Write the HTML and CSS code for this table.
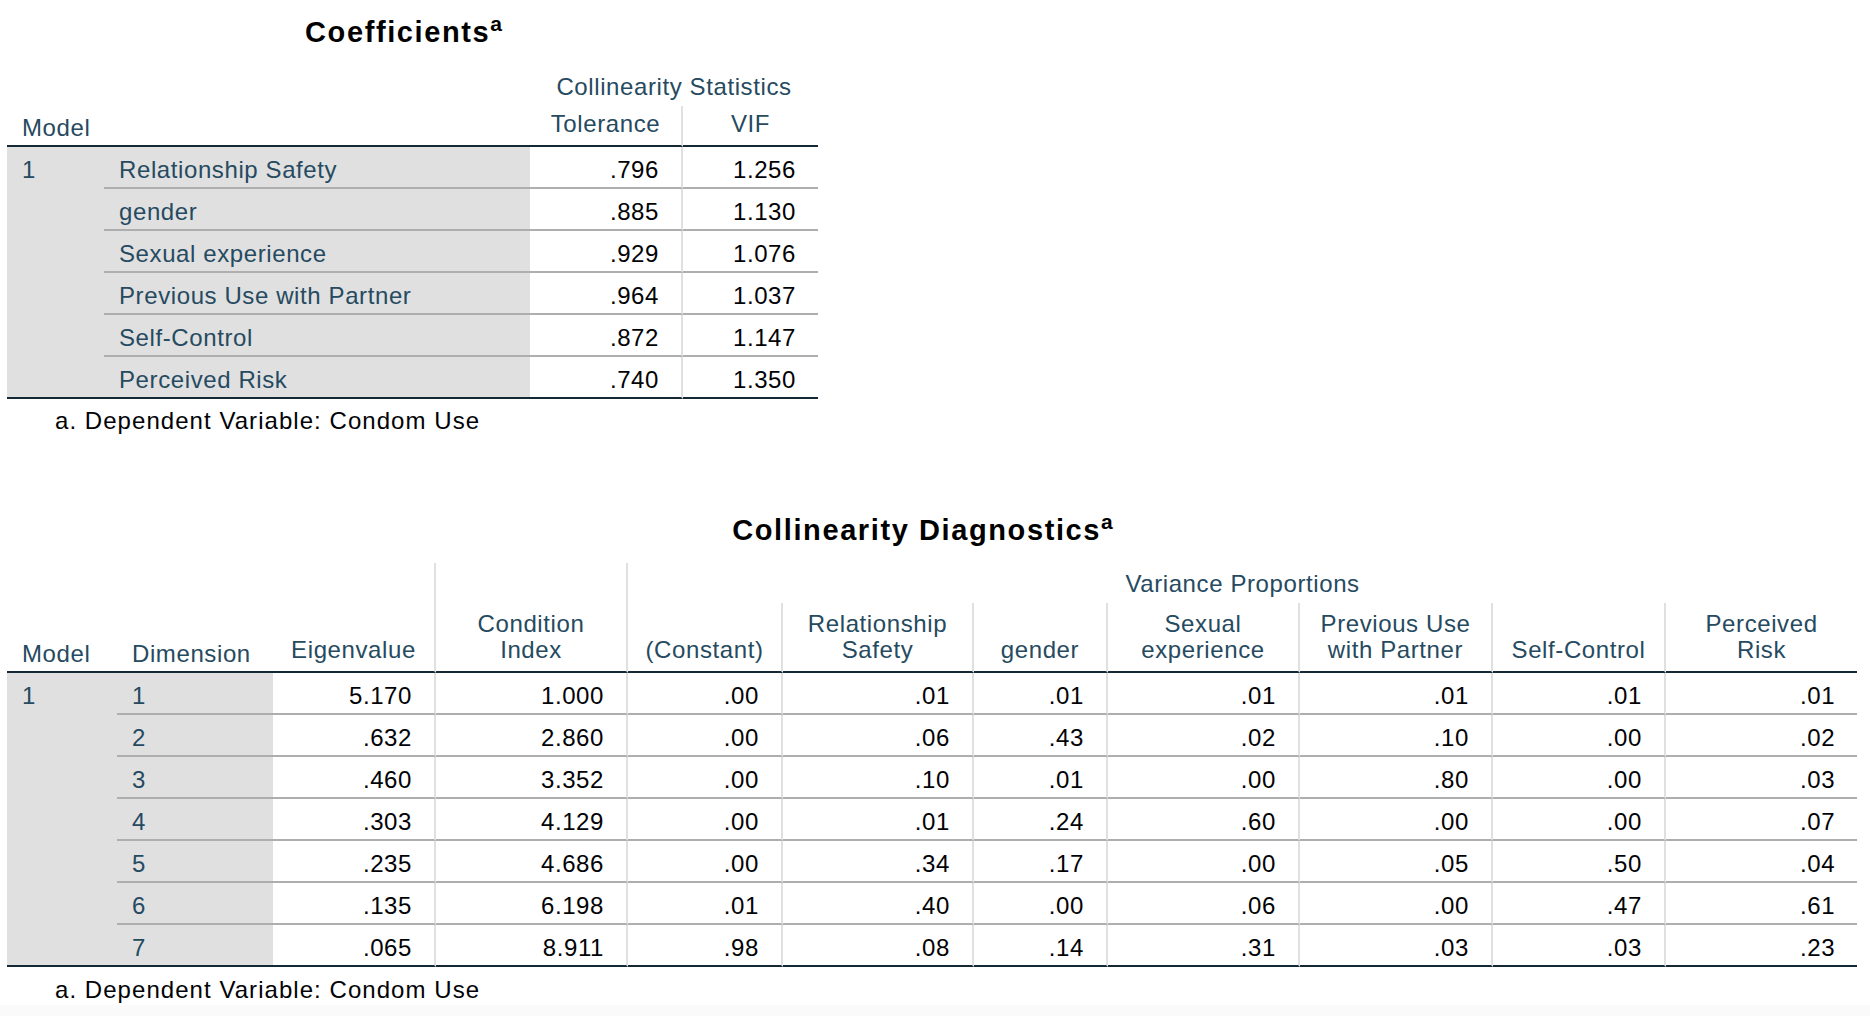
FILE: index.html
```html
<!DOCTYPE html>
<html lang="en">
<head>
<meta charset="utf-8">
<title>Coefficients and Collinearity Diagnostics</title>
<link rel="stylesheet" href="styles.css">
</head>
<body>
<main class="page">
  <section class="block block-coef">
    <div class="title title-coef">Coefficients<sup>a</sup></div>
    <table class="spss t-coef">
      <colgroup>
        <col class="c-model1"><col class="c-label"><col class="c-tol"><col class="c-vif">
      </colgroup>
      <thead>
        <tr class="h1-coef">
          <th class="dim" colspan="2" rowspan="2">Model</th>
          <th class="grp" colspan="2">Collinearity Statistics</th>
        </tr>
        <tr class="h2-coef">
          <th class="col vline">Tolerance</th>
          <th class="col">VIF</th>
        </tr>
      </thead>
      <tbody>
        <tr>
          <td class="gray mcell" rowspan="6">1</td>
          <td class="gray lab">Relationship Safety</td>
          <td class="num vline">.796</td>
          <td class="num">1.256</td>
        </tr>
        <tr>
          <td class="gray lab">gender</td>
          <td class="num vline">.885</td>
          <td class="num">1.130</td>
        </tr>
        <tr>
          <td class="gray lab">Sexual experience</td>
          <td class="num vline">.929</td>
          <td class="num">1.076</td>
        </tr>
        <tr>
          <td class="gray lab">Previous Use with Partner</td>
          <td class="num vline">.964</td>
          <td class="num">1.037</td>
        </tr>
        <tr>
          <td class="gray lab">Self-Control</td>
          <td class="num vline">.872</td>
          <td class="num">1.147</td>
        </tr>
        <tr class="last">
          <td class="gray lab">Perceived Risk</td>
          <td class="num vline">.740</td>
          <td class="num">1.350</td>
        </tr>
      </tbody>
    </table>
    <div class="footnote">a. Dependent Variable: Condom Use</div>
  </section>

  <section class="block block-diag">
    <div class="title title-diag">Collinearity Diagnostics<sup>a</sup></div>
    <table class="spss t-diag">
      <colgroup>
        <col class="d-model"><col class="d-dim"><col class="d-eig"><col class="d-cond">
        <col class="d-const"><col class="d-rel"><col class="d-gen"><col class="d-sex">
        <col class="d-prev"><col class="d-self"><col class="d-risk">
      </colgroup>
      <thead>
        <tr class="h1-diag">
          <th class="dim" rowspan="2">Model</th>
          <th class="dim" rowspan="2">Dimension</th>
          <th class="col vline" rowspan="2">Eigenvalue</th>
          <th class="col vline" rowspan="2">Condition<br>Index</th>
          <th class="grp" colspan="7">Variance Proportions</th>
        </tr>
        <tr class="h2-diag">
          <th class="col vline">(Constant)</th>
          <th class="col vline">Relationship<br>Safety</th>
          <th class="col vline">gender</th>
          <th class="col vline">Sexual<br>experience</th>
          <th class="col vline">Previous Use<br>with Partner</th>
          <th class="col vline">Self-Control</th>
          <th class="col">Perceived<br>Risk</th>
        </tr>
      </thead>
      <tbody>
        <tr>
          <td class="gray mcell" rowspan="7">1</td>
          <td class="gray lab">1</td>
          <td class="num vline">5.170</td><td class="num vline">1.000</td>
          <td class="num vline">.00</td><td class="num vline">.01</td><td class="num vline">.01</td>
          <td class="num vline">.01</td><td class="num vline">.01</td><td class="num vline">.01</td><td class="num">.01</td>
        </tr>
        <tr>
          <td class="gray lab">2</td>
          <td class="num vline">.632</td><td class="num vline">2.860</td>
          <td class="num vline">.00</td><td class="num vline">.06</td><td class="num vline">.43</td>
          <td class="num vline">.02</td><td class="num vline">.10</td><td class="num vline">.00</td><td class="num">.02</td>
        </tr>
        <tr>
          <td class="gray lab">3</td>
          <td class="num vline">.460</td><td class="num vline">3.352</td>
          <td class="num vline">.00</td><td class="num vline">.10</td><td class="num vline">.01</td>
          <td class="num vline">.00</td><td class="num vline">.80</td><td class="num vline">.00</td><td class="num">.03</td>
        </tr>
        <tr>
          <td class="gray lab">4</td>
          <td class="num vline">.303</td><td class="num vline">4.129</td>
          <td class="num vline">.00</td><td class="num vline">.01</td><td class="num vline">.24</td>
          <td class="num vline">.60</td><td class="num vline">.00</td><td class="num vline">.00</td><td class="num">.07</td>
        </tr>
        <tr>
          <td class="gray lab">5</td>
          <td class="num vline">.235</td><td class="num vline">4.686</td>
          <td class="num vline">.00</td><td class="num vline">.34</td><td class="num vline">.17</td>
          <td class="num vline">.00</td><td class="num vline">.05</td><td class="num vline">.50</td><td class="num">.04</td>
        </tr>
        <tr>
          <td class="gray lab">6</td>
          <td class="num vline">.135</td><td class="num vline">6.198</td>
          <td class="num vline">.01</td><td class="num vline">.40</td><td class="num vline">.00</td>
          <td class="num vline">.06</td><td class="num vline">.00</td><td class="num vline">.47</td><td class="num">.61</td>
        </tr>
        <tr class="last">
          <td class="gray lab">7</td>
          <td class="num vline">.065</td><td class="num vline">8.911</td>
          <td class="num vline">.98</td><td class="num vline">.08</td><td class="num vline">.14</td>
          <td class="num vline">.31</td><td class="num vline">.03</td><td class="num vline">.03</td><td class="num">.23</td>
        </tr>
      </tbody>
    </table>
    <div class="footnote">a. Dependent Variable: Condom Use</div>
  </section>
  <div class="bottom-band"></div>
</main>
</body>
</html>
```

FILE: styles.css
```css
html, body {
  margin: 0;
  padding: 0;
  background: #ffffff;
}

body {
  font-family: "Liberation Sans", Arial, sans-serif;
  color: #264a60;
  width: 1870px;
  height: 1016px;
  overflow: hidden;
}

.page {
  display: flex;
  flex-direction: column;
  padding-left: 7px;
}

.block-coef {
  width: 811px;
  padding-top: 15px;
}

.block-diag {
  width: 1850px;
  margin-top: 79px;
}

.title {
  font-size: 29px;
  line-height: 34px;
  font-weight: bold;
  color: #000000;
  letter-spacing: 1.6px;
  text-align: center;
  white-space: nowrap;
}

.title sup {
  font-size: 21px;
  line-height: 0;
  letter-spacing: 0;
  vertical-align: 11px;
}

.title-coef {
  padding-right: 18px;
}

.title-diag {
  padding-right: 19px;
  margin-bottom: 16px;
}

.spss {
  border-collapse: separate;
  border-spacing: 0;
  table-layout: fixed;
  font-size: 24px;
  line-height: 26px;
  letter-spacing: 0.6px;
}

.t-coef { width: 811px; }
.t-diag { width: 1850px; }

.c-model1 { width: 97px; }
.c-label { width: 426px; }
.c-tol { width: 153px; }
.c-vif { width: 135px; }

.d-model { width: 110px; }
.d-dim { width: 156px; }
.d-eig { width: 163px; }
.d-cond { width: 192px; }
.d-const { width: 155px; }
.d-rel { width: 191px; }
.d-gen { width: 134px; }
.d-sex { width: 192px; }
.d-prev { width: 193px; }
.d-self { width: 173px; }
.d-risk { width: 191px; }

.spss th,
.spss td {
  padding: 0;
  font-weight: normal;
  white-space: nowrap;
  overflow: visible;
}

/* header rows */
.h1-coef { height: 57px; }
.h2-coef { height: 41px; }
.h1-diag { height: 40px; }
.h2-diag { height: 70px; }

.spss th.grp {
  text-align: center;
  vertical-align: bottom;
  padding: 0 8px 6px;
}

.spss th.col {
  text-align: center;
  vertical-align: bottom;
  padding: 0 8px 8px;
  border-bottom: 2px solid #152935;
}

.spss th.dim {
  text-align: left;
  vertical-align: bottom;
  padding: 0 8px 4px 15px;
  border-bottom: 2px solid #152935;
}

.spss .vline {
  border-right: 2px solid #e0e0e0;
}

/* body rows: 26px line + 9px + 5px padding + 2px rule = 42px */
.spss td {
  padding-top: 10px;
  padding-bottom: 4px;
  vertical-align: top;
  border-bottom: 2px solid #aeaeae;
}

.spss td.gray {
  background: #e0e0e0;
}

.spss td.lab,
.spss td.mcell {
  text-align: left;
  padding-left: 15px;
  color: #264a60;
}

.spss td.mcell {
  border-bottom: 2px solid #152935;
}

.spss td.num {
  text-align: right;
  padding-right: 22px;
  color: #010205;
}

.spss tr.last td {
  border-bottom: 2px solid #152935;
}

.footnote {
  font-size: 24px;
  line-height: 26px;
  letter-spacing: 1.05px;
  color: #010205;
  padding-left: 48px;
  margin-top: 9px;
}

.block-diag .footnote {
  margin-top: 10px;
}

.bottom-band {
  position: absolute;
  left: 0;
  right: 0;
  bottom: 0;
  height: 11px;
  background: #fafafa;
}
```
